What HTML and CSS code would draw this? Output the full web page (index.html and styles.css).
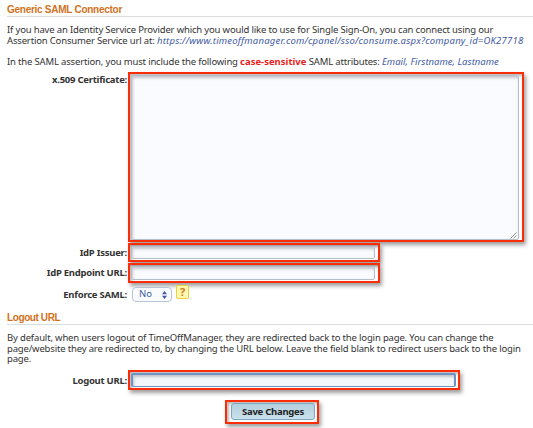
FILE: index.html
```html
<!DOCTYPE html>
<html lang="en">
<head>
<meta charset="utf-8">
<title>Generic SAML Connector</title>
<link rel="stylesheet" href="styles.css">
</head>
<body>
<main>
  <h2>Generic SAML Connector</h2>
  <div class="copy intro">
    <p>If you have an Identity Service Provider which you would like to use for Single Sign-On, you can connect using our<br>
    Assertion Consumer Service url at: <em class="url">https://www.timeoffmanager.com/cpanel/sso/consume.aspx?company_id=OK27718</em></p>
    <p class="l3">In the SAML assertion, you must include the following <strong>case-sensitive</strong> SAML attributes: <em>Email, Firstname, Lastname</em></p>
  </div>
  <div class="row cert">
    <label>x.509 Certificate:</label>
    <div class="mark"><div class="field area"><svg class="grip" viewBox="0 0 7 7"><path d="M.5 6.5l6-6M3.5 6.5l3-3"/></svg></div></div>
  </div>
  <div class="row issuer">
    <label>IdP Issuer:</label>
    <div class="mark"><div class="field"></div></div>
  </div>
  <div class="row endpoint">
    <label>IdP Endpoint URL:</label>
    <div class="mark"><div class="field"></div></div>
  </div>
  <div class="row enforce">
    <label>Enforce SAML:</label>
    <div class="select"><span>No</span><svg viewBox="0 0 5 8"><path d="M0 3.3L2.5 0 5 3.3zM0 4.7h5L2.5 8z"/></svg></div>
    <div class="help">?</div>
  </div>
  <h2 class="second">Logout URL</h2>
  <div class="copy outro">
    <p>By default, when users logout of TimeOffManager, they are redirected back to the login page. You can change the<br>
    page/website they are redirected to, by changing the URL below. Leave the field blank to redirect users back to the login<br>
    page.</p>
  </div>
  <div class="row logout">
    <label>Logout URL:</label>
    <div class="mark"><div class="field focus"></div></div>
  </div>
  <div class="mark save"><button>Save Changes</button></div>
</main>
</body>
</html>
```
FILE: styles.css
```css
* { box-sizing: border-box; }
body { margin: 0; background: #fff; color: #333; font: 9.5px/10.5px "Noto Sans", sans-serif; overflow: hidden; }
main { height: 428px; padding-top: 3px; }
h2 { margin: 0 0 0 7px; height: 14px; border-bottom: 1px solid #ddd; font: bold 10px/13px "Liberation Sans", sans-serif; letter-spacing: -.27px; color: #d2711c; white-space: nowrap; }
.second { letter-spacing: -.4px; }
.copy { padding-left: 7px; letter-spacing: -.165px; }
.copy p { margin: 0; white-space: nowrap; }
.intro { height: 55px; padding-top: 8px; }
.copy .l3 { margin-top: 10.5px; }
em { color: #3f5ba3; letter-spacing: .02px; }
.url { letter-spacing: .21px; }
strong { color: #ee1c1c; letter-spacing: 0; }
.row { display: flex; }
.row label { width: 127px; margin-right: 1px; text-align: right; font-weight: bold; letter-spacing: -.25px; white-space: nowrap; }
.mark { border: 2px solid #fb2c08; box-shadow: 2px 3px 4px rgba(0,0,0,.38), inset 2px 2px 3px rgba(0,0,0,.28); padding: 1px; }
.field { height: 100%; border: 1px solid #b5bfcc; border-radius: 2px; background: #fafbff; box-shadow: inset 1px 2px 3px rgba(0,0,0,.22); }
.cert { height: 171px; }
.cert label { padding-top: 3px; }
.cert .mark { width: 396px; height: 170px; padding: 1px 3px 0 1px; }
.area { display: flex; align-items: flex-end; justify-content: flex-end; padding: 0 1px 0 0; }
.grip { width: 7px; height: 7px; fill: none; stroke: #777; stroke-width: .8; }
.issuer { height: 20px; }
.issuer label, .endpoint label { padding-top: 5px; }
.issuer .mark, .endpoint .mark { width: 252px; height: 19px; padding-right: 3px; }
.endpoint .mark { height: 20px; }
.endpoint { height: 22px; }
.enforce { height: 26px; }
.enforce label { padding-top: 5px; }
.select { display: flex; align-items: center; justify-content: space-between; width: 40px; height: 15px; margin: 2px 4px 0; padding: 0 4px 0 6px; border: 1px solid #b9c5d6; border-radius: 4px; background: #f9fbff; color: #3f5ba3; }
.select svg { width: 5px; height: 8px; fill: #3f5ba3; }
.help { width: 13px; height: 14px; border: 1px solid #eed03a; border-radius: 2px; background: #fff8b0; color: #d87810; font-size: 11px; font-weight: bold; line-height: 12px; text-align: center; }
.outro { height: 45px; padding-top: 8px; }
.logout { height: 30px; }
.logout label { padding-top: 6px; }
.logout .mark { width: 332px; height: 20px; padding-right: 2px; }
.focus { border-color: #6f93c4; border-width: 2px 2px 1px; background: #f3f8fb; }
.save { width: 94px; height: 24px; margin-left: 225px; padding: 1px 2px 2px 4px; }
button { display: block; width: 84px; height: 17px; padding: 0; border: 1px solid #7fa6ba; border-radius: 3px; background: linear-gradient(#b3cfdd, #c9e1ec); color: #222; font: bold 9.5px/14px "Noto Sans", sans-serif; letter-spacing: -.25px; }
```
